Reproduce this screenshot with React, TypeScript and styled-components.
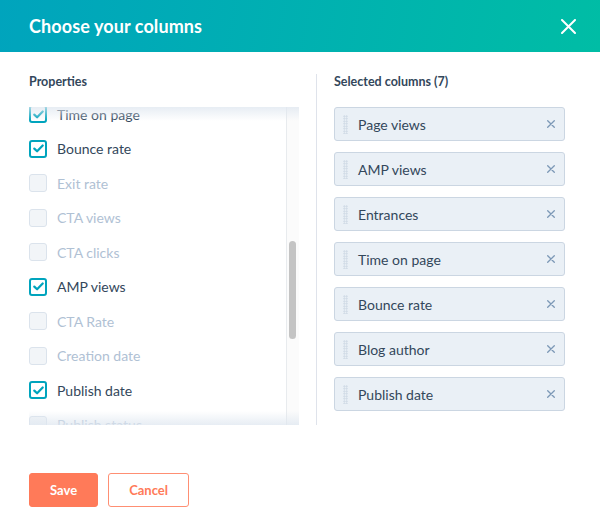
import React, { useLayoutEffect, useRef, useState } from 'react'
import styled, { createGlobalStyle, css } from 'styled-components'

const GlobalStyle = createGlobalStyle`
  html, body {
    margin: 0;
    padding: 0;
    background: #fff;
    font-family: Lato, "Noto Sans", "Liberation Sans", sans-serif;
    -webkit-font-smoothing: antialiased;
  }
  * { box-sizing: border-box; }
`

const Dialog = styled.div`
  width: 600px;
  height: 525px;
  display: flex;
  flex-direction: column;
  background: #fff;
`
const Header = styled.div`
  height: 52px;
  flex: none;
  display: flex;
  align-items: center;
  justify-content: space-between;
  padding: 0 20px 0 29px;
  background: linear-gradient(100deg, #00a4bd 0%, #00bda5 100%);
`
const Title = styled.h1`
  margin: 0;
  color: #fff;
  font-size: 18px;
  font-weight: 700;
  letter-spacing: 0.1px;
`
const CloseButton = styled.button`
  width: 24px;
  height: 24px;
  padding: 0;
  border: 0;
  background: none;
  display: flex;
  align-items: center;
  justify-content: center;
  cursor: pointer;
`
const Body = styled.div`
  flex: none;
  display: flex;
  padding: 22px 35px 0 29px;
`
const LeftColumn = styled.div`
  width: 270px;
  display: flex;
  flex-direction: column;
`
const Divider = styled.div`
  width: 1px;
  margin: 0 17px;
  background: #dfe3eb;
`
const RightColumn = styled.div`
  flex: 1;
  display: flex;
  flex-direction: column;
`
const SectionLabel = styled.div`
  height: 16px;
  line-height: 16px;
  margin-bottom: 17px;
  color: #33475b;
  font-size: 12.5px;
  font-weight: 700;
`
const ListBox = styled.div`
  position: relative;
  height: 318px;
  display: flex;
  &::before,
  &::after {
    content: '';
    position: absolute;
    left: 0;
    right: 0;
    height: 14px;
    pointer-events: none;
    z-index: 1;
  }
  &::before {
    top: 0;
    background: linear-gradient(to bottom, rgba(223, 231, 240, 0.75), rgba(255, 255, 255, 0));
  }
  &::after {
    bottom: 0;
    background: linear-gradient(to top, rgba(223, 231, 240, 0.75), rgba(255, 255, 255, 0));
  }
`
const ScrollArea = styled.div`
  flex: 1;
  height: 100%;
  overflow: hidden;
`
const Track = styled.div`
  position: relative;
  width: 13px;
  flex: none;
  background: #fbfbfb;
  border-left: 1px solid #e8ebee;
`
const Thumb = styled.div`
  position: absolute;
  left: 2px;
  width: 7px;
  border-radius: 4px;
  background: #c4c4c4;
`
const Option = styled.label<{ $checked: boolean }>`
  height: 34.5px;
  display: flex;
  align-items: center;
  gap: 10px;
  font-size: 14px;
  color: ${p => (p.$checked ? '#33475b' : '#b0c1d4')};
`
const Box = styled.span<{ $checked: boolean }>`
  width: 18px;
  height: 18px;
  flex: none;
  border-radius: 3px;
  display: flex;
  align-items: center;
  justify-content: center;
  ${p =>
    p.$checked
      ? css`
          background: #fff;
          border: 2px solid #00a4bd;
        `
      : css`
          background: #f2f5f8;
          border: 1px solid #dbe3ec;
        `}
`
const Cards = styled.div`
  display: flex;
  flex-direction: column;
  gap: 11px;
`
const Card = styled.div`
  width: 231px;
  height: 34px;
  display: flex;
  align-items: center;
  padding: 0 7px 0 8px;
  background: #eaf0f6;
  border: 1px solid #cbd6e2;
  border-radius: 3px;
  color: #33475b;
  font-size: 14px;
`
const Handle = styled.span`
  width: 5px;
  height: 19px;
  flex: none;
  margin-right: 10px;
  background-image: radial-gradient(circle, #cdd8e4 0.8px, transparent 1px);
  background-size: 2.5px 2.5px;
`
const CardLabel = styled.span`
  flex: 1;
`
const Remove = styled.button`
  width: 12px;
  height: 12px;
  padding: 0;
  border: 0;
  background: none;
  display: flex;
  align-items: center;
  justify-content: center;
`
const Footer = styled.div`
  display: flex;
  gap: 10px;
  padding: 48px 0 0 29px;
`
const Button = styled.button<{ $primary?: boolean }>`
  height: 34px;
  padding: 0 ${p => (p.$primary ? '20px' : '18px')};
  min-width: ${p => (p.$primary ? '69px' : '81px')};
  border-radius: 3px;
  font-family: inherit;
  font-size: 13px;
  font-weight: 700;
  cursor: pointer;
  ${p =>
    p.$primary
      ? css`
          background: #ff7a59;
          border: 1px solid #ff7a59;
          color: #fff;
        `
      : css`
          background: #fff;
          border: 1px solid #ff8f73;
          color: #ff7a59;
        `}
`

const properties: { name: string; checked?: boolean }[] = [
  { name: 'Page title' },
  { name: 'Page views', checked: true },
  { name: 'Entrances', checked: true },
  { name: 'New contacts' },
  { name: 'Submissions' },
  { name: 'Submission rate' },
  { name: 'Contacts' },
  { name: 'Customers' },
  { name: 'Blog subscribers' },
  { name: 'Page URL' },
  { name: 'Content group' },
  { name: 'Language' },
  { name: 'Time on page', checked: true },
  { name: 'Bounce rate', checked: true },
  { name: 'Exit rate' },
  { name: 'CTA views' },
  { name: 'CTA clicks' },
  { name: 'AMP views', checked: true },
  { name: 'CTA Rate' },
  { name: 'Creation date' },
  { name: 'Publish date', checked: true },
  { name: 'Publish status' },
  { name: 'Blog author', checked: true },
  { name: 'Last updated' },
  { name: 'Tags' },
  { name: 'Campaign' },
  { name: 'Meta description' },
  { name: 'Exits' },
  { name: 'Average time' },
  { name: 'Domain' },
]

const selected = ['Page views', 'AMP views', 'Entrances', 'Time on page', 'Bounce rate', 'Blog author', 'Publish date']

const Check = () => (
  <svg width="11" height="9" viewBox="0 0 11 9">
    <path d="M1.3 4.6 L4.1 7.3 L9.7 1.5" fill="none" stroke="#00a4bd" strokeWidth="2.2" strokeLinecap="round" strokeLinejoin="round" />
  </svg>
)

const App: React.FC = () => {
  const scrollRef = useRef<HTMLDivElement>(null)
  const [thumb, setThumb] = useState({ top: 0, height: 0 })

  useLayoutEffect(() => {
    const el = scrollRef.current
    if (!el) return
    el.scrollTop = 424
    const ratio = el.clientHeight / el.scrollHeight
    setThumb({
      top: (el.scrollTop / el.scrollHeight) * el.clientHeight + 4,
      height: el.clientHeight * ratio,
    })
  }, [])

  return (
    <>
      <GlobalStyle />
      <Dialog>
        <Header>
          <Title>Choose your columns</Title>
          <CloseButton aria-label="Close">
            <svg width="15" height="15" viewBox="0 0 15 15">
              <path d="M1 1 L14 14 M14 1 L1 14" stroke="#fff" strokeWidth="2" strokeLinecap="round" />
            </svg>
          </CloseButton>
        </Header>

        <Body>
          <LeftColumn>
            <SectionLabel>Properties</SectionLabel>
            <ListBox>
              <ScrollArea ref={scrollRef}>
                {properties.map(property => (
                  <Option key={property.name} $checked={!!property.checked}>
                    <Box $checked={!!property.checked}>{property.checked && <Check />}</Box>
                    {property.name}
                  </Option>
                ))}
              </ScrollArea>
              <Track>
                <Thumb style={{ top: thumb.top, height: thumb.height }} />
              </Track>
            </ListBox>
          </LeftColumn>

          <Divider />

          <RightColumn>
            <SectionLabel>Selected columns ({selected.length})</SectionLabel>
            <Cards>
              {selected.map(name => (
                <Card key={name}>
                  <Handle />
                  <CardLabel>{name}</CardLabel>
                  <Remove aria-label={`Remove ${name}`}>
                    <svg width="8" height="8" viewBox="0 0 8 8">
                      <path d="M0.7 0.7 L7.3 7.3 M7.3 0.7 L0.7 7.3" stroke="#7c98b6" strokeWidth="1.3" strokeLinecap="round" />
                    </svg>
                  </Remove>
                </Card>
              ))}
            </Cards>
          </RightColumn>
        </Body>

        <Footer>
          <Button $primary>Save</Button>
          <Button>Cancel</Button>
        </Footer>
      </Dialog>
    </>
  )
}

export default App
